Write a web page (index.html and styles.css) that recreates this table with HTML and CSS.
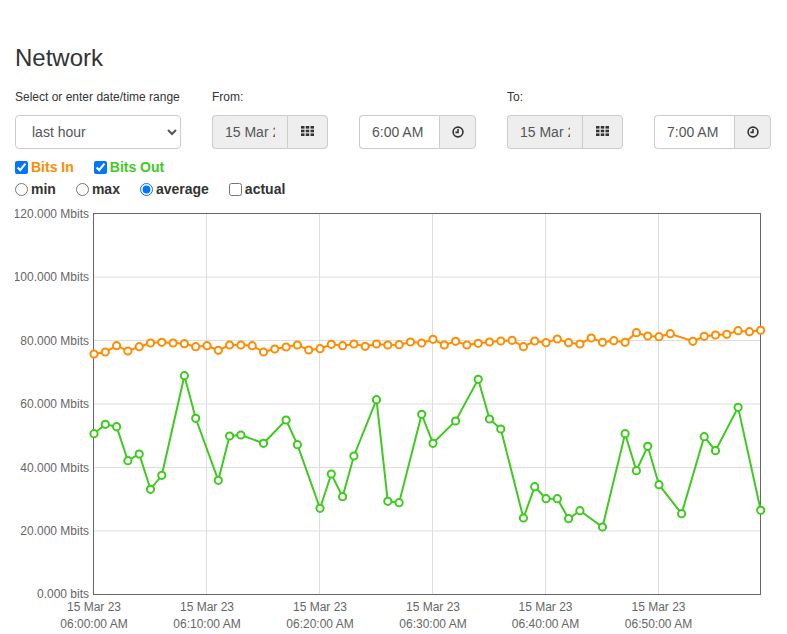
FILE: index.html
```html
<!DOCTYPE html>
<html>
<head>
<meta charset="utf-8">
<title>Network</title>
<link rel="stylesheet" href="styles.css">
</head>
<body>
<h1 class="title">Network</h1>

<div class="controls">
  <label class="lbl lbl-range">Select or enter date/time range</label>
  <label class="lbl lbl-from">From:</label>
  <label class="lbl lbl-to">To:</label>

  <select class="range-select">
    <option>last hour</option>
  </select>

  <div class="igroup date-group">
    <input class="ifield ifield-ro" type="text" value="15 Mar 2023" readonly>
    <span class="iaddon addon-date">
      <svg class="ico-grid" viewBox="0 0 13 10" width="13" height="10"><rect x="0" y="0" width="3.5" height="2.6"/><rect x="4.75" y="0" width="3.5" height="2.6"/><rect x="9.5" y="0" width="3.5" height="2.6"/><rect x="0" y="3.7" width="3.5" height="2.6"/><rect x="4.75" y="3.7" width="3.5" height="2.6"/><rect x="9.5" y="3.7" width="3.5" height="2.6"/><rect x="0" y="7.4" width="3.5" height="2.6"/><rect x="4.75" y="7.4" width="3.5" height="2.6"/><rect x="9.5" y="7.4" width="3.5" height="2.6"/></svg>
    </span>
  </div>

  <div class="igroup time-group">
    <input class="ifield" type="text" value="6:00 AM">
    <span class="iaddon addon-time">
      <svg class="ico-clock" viewBox="0 0 12 12" width="12" height="12"><circle cx="6" cy="6" r="4.9"/><path d="M6 2.9V6.4H3.4"/></svg>
    </span>
  </div>

  <div class="igroup date-group">
    <input class="ifield ifield-ro" type="text" value="15 Mar 2023" readonly>
    <span class="iaddon addon-date">
      <svg class="ico-grid" viewBox="0 0 13 10" width="13" height="10"><rect x="0" y="0" width="3.5" height="2.6"/><rect x="4.75" y="0" width="3.5" height="2.6"/><rect x="9.5" y="0" width="3.5" height="2.6"/><rect x="0" y="3.7" width="3.5" height="2.6"/><rect x="4.75" y="3.7" width="3.5" height="2.6"/><rect x="9.5" y="3.7" width="3.5" height="2.6"/><rect x="0" y="7.4" width="3.5" height="2.6"/><rect x="4.75" y="7.4" width="3.5" height="2.6"/><rect x="9.5" y="7.4" width="3.5" height="2.6"/></svg>
    </span>
  </div>

  <div class="igroup time-group">
    <input class="ifield" type="text" value="7:00 AM">
    <span class="iaddon addon-time">
      <svg class="ico-clock" viewBox="0 0 12 12" width="12" height="12"><circle cx="6" cy="6" r="4.9"/><path d="M6 2.9V6.4H3.4"/></svg>
    </span>
  </div>
</div>

<div class="opt-row">
  <label class="opt"><input type="checkbox" checked><span class="series-in">Bits In</span></label>
  <label class="opt"><input type="checkbox" checked><span class="series-out">Bits Out</span></label>
</div>
<div class="opt-row">
  <label class="opt"><input type="radio" name="agg"><span>min</span></label>
  <label class="opt"><input type="radio" name="agg"><span>max</span></label>
  <label class="opt"><input type="radio" name="agg" checked><span>average</span></label>
  <label class="opt"><input type="checkbox"><span>actual</span></label>
</div>

<div class="chart">
<svg class="chart-svg" viewBox="15 204 772 430" width="772" height="430">
  <defs>
    <marker id="dot-in" viewBox="-5 -5 10 10" markerWidth="10" markerHeight="10" refX="0" refY="0" markerUnits="userSpaceOnUse">
      <circle r="3.6" fill="#fff" stroke="#ff8c00" stroke-width="2"/>
    </marker>
    <marker id="dot-out" viewBox="-5 -5 10 10" markerWidth="10" markerHeight="10" refX="0" refY="0" markerUnits="userSpaceOnUse">
      <circle r="3.6" fill="#fff" stroke="#3fca1f" stroke-width="2"/>
    </marker>
  </defs>
  <g class="grid">
    <line x1="93.5" y1="277" x2="760.5" y2="277"/>
    <line x1="93.5" y1="340.5" x2="760.5" y2="340.5"/>
    <line x1="93.5" y1="404" x2="760.5" y2="404"/>
    <line x1="93.5" y1="467.5" x2="760.5" y2="467.5"/>
    <line x1="93.5" y1="531" x2="760.5" y2="531"/>
    <line x1="206.5" y1="213.5" x2="206.5" y2="594.5"/>
    <line x1="319.5" y1="213.5" x2="319.5" y2="594.5"/>
    <line x1="432.5" y1="213.5" x2="432.5" y2="594.5"/>
    <line x1="545.5" y1="213.5" x2="545.5" y2="594.5"/>
    <line x1="658.5" y1="213.5" x2="658.5" y2="594.5"/>
  </g>
  <rect class="frame" x="93.5" y="213.5" width="667" height="381"/>
  <g class="ylabels">
    <text x="89" y="217.5">120.000 Mbits</text>
    <text x="89" y="281">100.000 Mbits</text>
    <text x="89" y="344.5">80.000 Mbits</text>
    <text x="89" y="408">60.000 Mbits</text>
    <text x="89" y="471.5">40.000 Mbits</text>
    <text x="89" y="535">20.000 Mbits</text>
    <text x="89" y="598">0.000 bits</text>
  </g>
  <g class="xlabels">
    <text x="94" y="611">15 Mar 23</text><text x="94" y="628">06:00:00 AM</text>
    <text x="207" y="611">15 Mar 23</text><text x="207" y="628">06:10:00 AM</text>
    <text x="320" y="611">15 Mar 23</text><text x="320" y="628">06:20:00 AM</text>
    <text x="433" y="611">15 Mar 23</text><text x="433" y="628">06:30:00 AM</text>
    <text x="545.5" y="611">15 Mar 23</text><text x="545.5" y="628">06:40:00 AM</text>
    <text x="658.5" y="611">15 Mar 23</text><text x="658.5" y="628">06:50:00 AM</text>
  </g>
  <polyline class="line-out" marker-start="url(#dot-out)" marker-mid="url(#dot-out)" marker-end="url(#dot-out)" points="94,433.7 105.3,424.3 116.6,426.7 127.9,460.7 139.2,454 150.5,489.3 161.8,475.3 184.4,375.7 195.7,418.3 218.3,480.3 229.6,436 240.9,435 263.5,443.3 286.1,420 297.4,444.7 320,508.3 331.3,474 342.6,496.7 353.9,456 376.5,399.7 387.8,501.3 399.1,502.7 421.7,414.3 433,443.3 455.6,421 478.2,379.3 489.5,419 500.8,429 523.4,518 534.7,486.7 546,498.7 557.3,498.7 568.6,518.7 579.9,510.7 602.5,527 625.1,433.7 636.4,470.7 647.7,446.3 659,484.7 681.6,513.7 704.2,436.7 715.5,450.7 738.1,407.3 760.7,510.3"/>
  <polyline class="line-in" marker-start="url(#dot-in)" marker-mid="url(#dot-in)" marker-end="url(#dot-in)" points="94,354 105.3,352 116.6,345.7 127.9,351 139.2,346.7 150.5,343 161.8,342.3 173.1,343 184.4,343.7 195.7,346.7 207,345.7 218.3,350.3 229.6,345 240.9,345 252.2,345.7 263.5,352 274.8,349 286.1,347 297.4,345 308.7,350 320,348.7 331.3,344.3 342.6,345.7 353.9,344 365.2,346.3 376.5,344 387.8,345 399.1,344.7 410.4,342 421.7,343 433,339.3 444.3,345 455.6,341.3 466.9,345 478.2,343.3 489.5,342 500.8,341 512.1,340.3 523.4,346.7 534.7,341 546,342.7 557.3,339 568.6,342.7 579.9,344 591.2,338 602.5,342.3 613.8,340.7 625.1,342.3 636.4,332.7 647.7,336 659,336.7 670.3,333.7 692.9,341.3 704.2,336.3 715.5,335 726.8,334.3 738.1,330.7 749.4,331.7 760.7,330.3"/>
</svg>
</div>
</body>
</html>
```

FILE: styles.css
```css
html, body {
  margin: 0;
  padding: 0;
  overflow: hidden;
}
body {
  padding: 0 15px;
  font-family: "Liberation Sans", Arial, Helvetica, sans-serif;
  font-size: 14px;
  color: #333;
  background: #fff;
}
.title {
  margin: 0;
  padding-top: 45px;
  font-size: 24px;
  line-height: 26px;
  font-weight: normal;
  color: #333;
}
.controls {
  margin-top: 18px;
  display: grid;
  grid-template-columns: 166px 116px 117px 116px 117px;
  grid-template-rows: 17px 34px;
  column-gap: 31px;
  row-gap: 9px;
}
.lbl {
  font-size: 12px;
  line-height: 17px;
  color: #333;
}
.lbl-range { grid-column: 1; grid-row: 1; }
.lbl-from { grid-column: 2; grid-row: 1; }
.lbl-to { grid-column: 4; grid-row: 1; }
.range-select {
  grid-column: 1;
  grid-row: 2;
  height: 34px;
  box-sizing: border-box;
  border: 1px solid #ccc;
  border-radius: 4px;
  background: #fff;
  padding: 0 8px 0 12px;
  font-family: "Liberation Sans", Arial, sans-serif;
  font-size: 14px;
  color: #555;
}
.igroup {
  grid-row: 2;
  display: flex;
  height: 34px;
}
.ifield {
  flex: 1;
  min-width: 0;
  box-sizing: border-box;
  height: 34px;
  margin: 0;
  border: 1px solid #ccc;
  border-right: none;
  border-radius: 4px 0 0 4px;
  padding: 6px 12px;
  font-family: "Liberation Sans", Arial, sans-serif;
  font-size: 14px;
  color: #555;
  background: #fff;
  outline: none;
}
.ifield-ro {
  background: #eee;
}
.iaddon {
  display: flex;
  align-items: center;
  justify-content: center;
  box-sizing: border-box;
  height: 34px;
  border: 1px solid #ccc;
  border-radius: 0 4px 4px 0;
  background: #eee;
  color: #333;
}
.addon-date { width: 41px; }
.addon-time { width: 37px; }
.ico-grid { fill: #333; margin-top: -2px; }
.ico-clock {
  fill: none;
  stroke: #333;
  stroke-width: 1.6;
  margin-top: -1px;
}
.opt-row {
  display: flex;
  gap: 20px;
  height: 22px;
  align-items: center;
}
.controls + .opt-row { margin-top: 7px; }
.opt {
  display: flex;
  align-items: center;
  font-size: 14px;
  font-weight: bold;
  color: #333;
}
.opt input {
  margin: 0 3px 0 0;
  width: 13px;
  height: 13px;
}
.series-in { color: #ff8c00; }
.series-out { color: #3fca1f; }
.chart {
  margin-top: 4px;
}
.chart-svg {
  display: block;
}
.grid line {
  stroke: #ddd;
  stroke-width: 1;
}
.frame {
  fill: none;
  stroke: #666;
  stroke-width: 1;
}
.ylabels text {
  font-family: "Liberation Sans", Arial, sans-serif;
  font-size: 12px;
  fill: #666;
  text-anchor: end;
}
.xlabels text {
  font-family: "Liberation Sans", Arial, sans-serif;
  font-size: 12px;
  fill: #666;
  text-anchor: middle;
}
.line-in {
  fill: none;
  stroke: #ff8c00;
  stroke-width: 2;
}
.line-out {
  fill: none;
  stroke: #3fca1f;
  stroke-width: 2;
}
```
